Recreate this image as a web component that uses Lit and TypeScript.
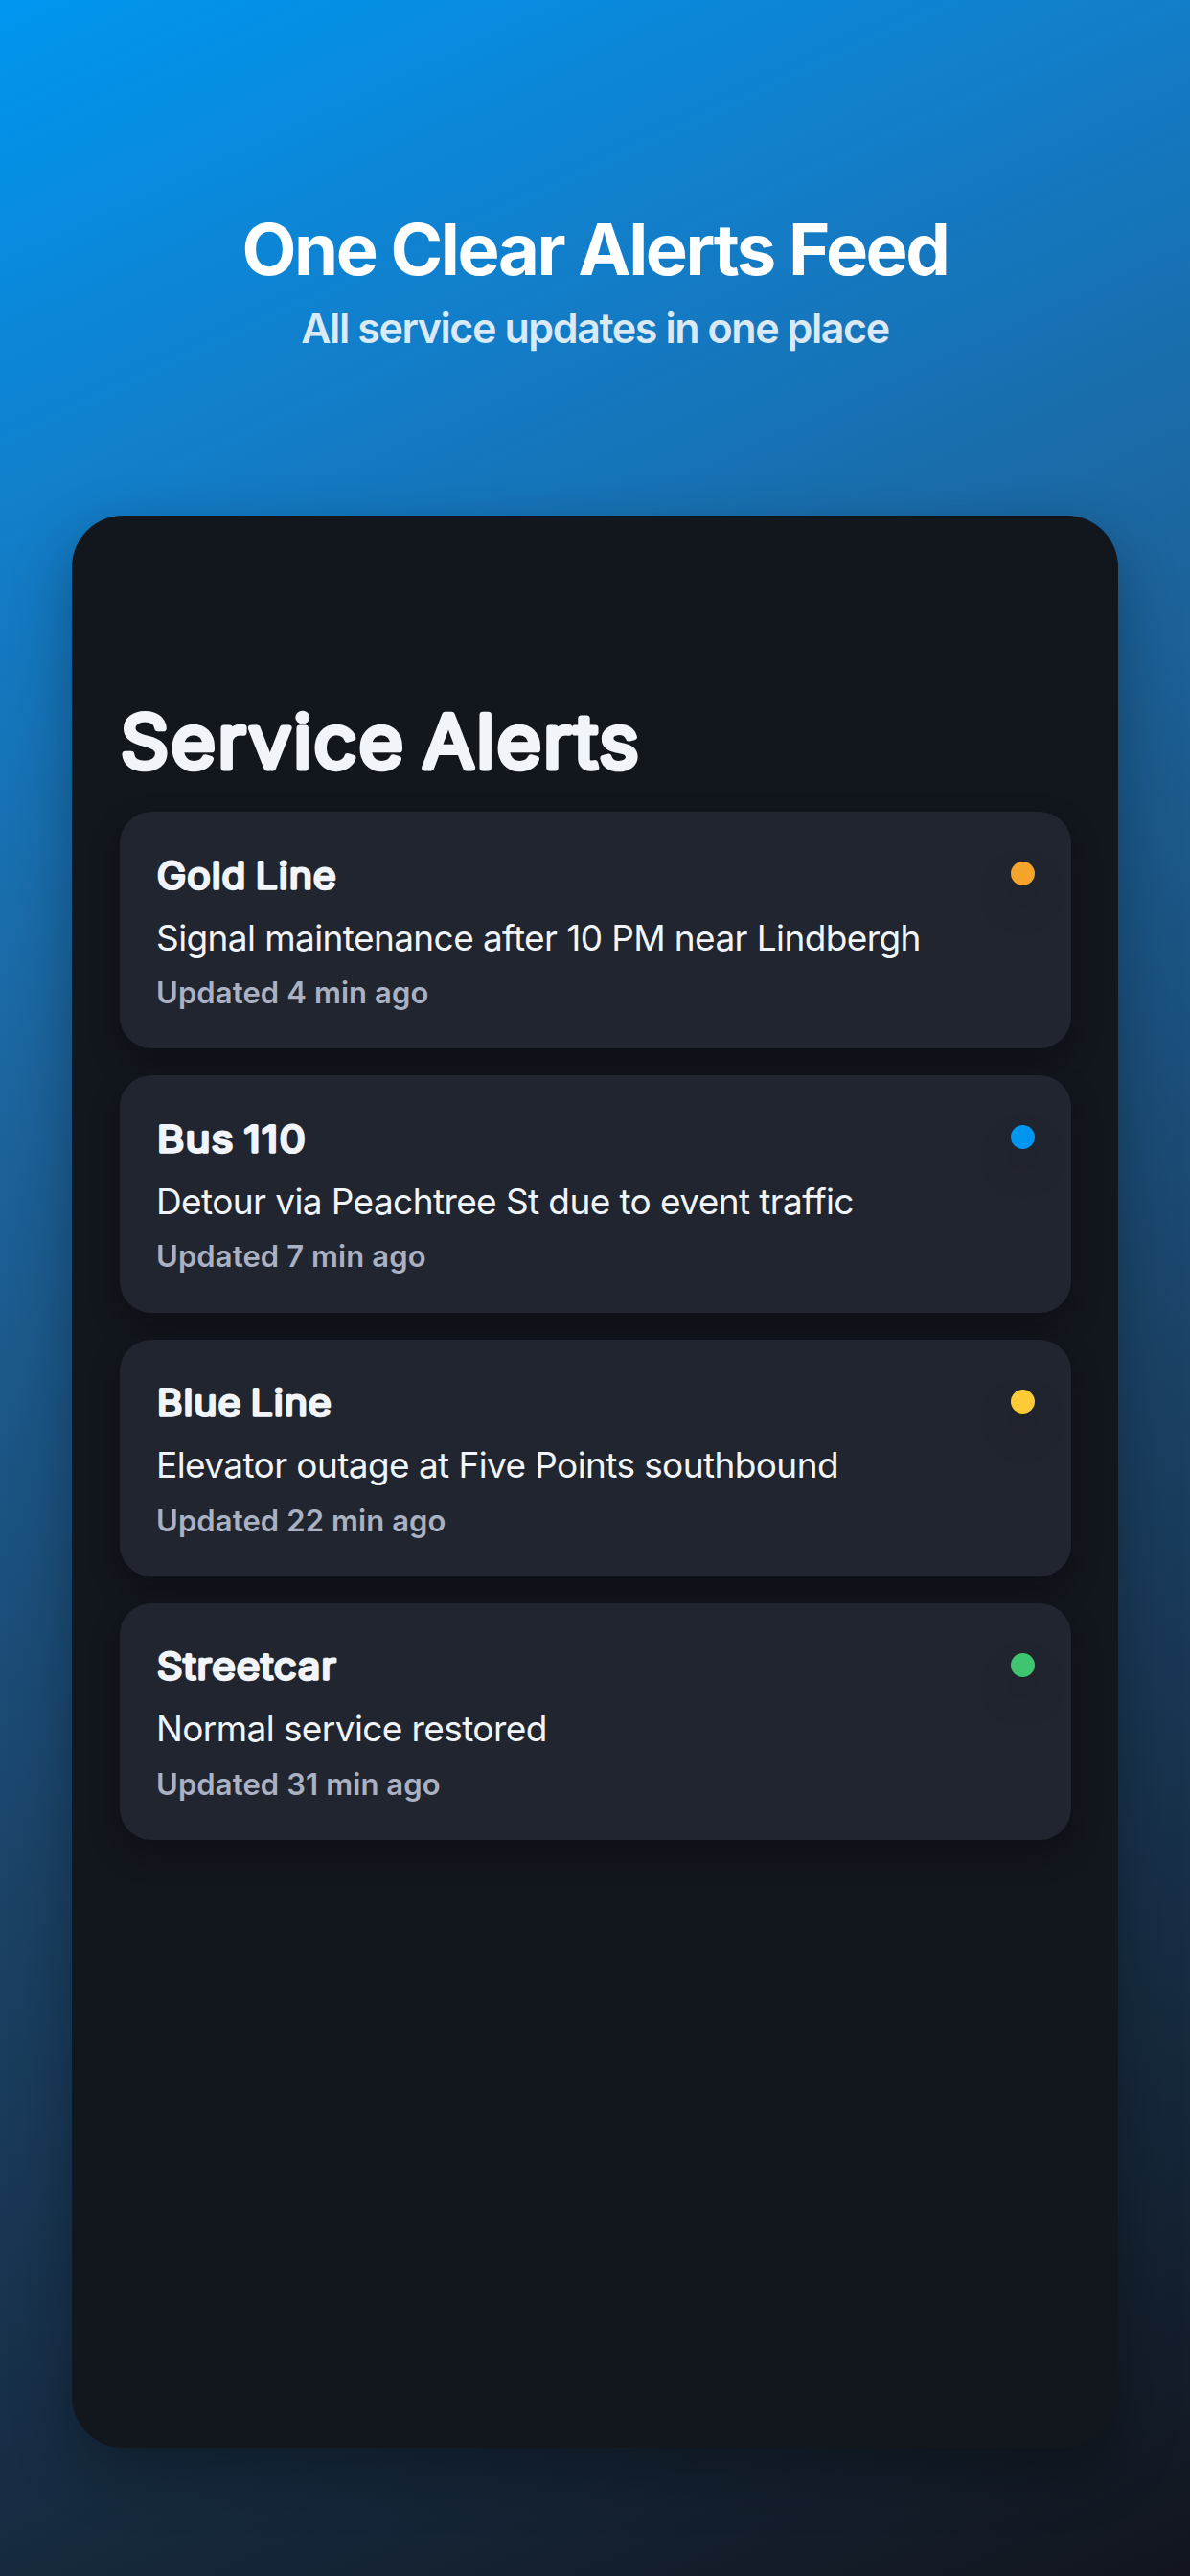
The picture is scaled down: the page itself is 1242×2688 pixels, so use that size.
import { LitElement, html, css, svg } from 'lit';
import { customElement, property } from 'lit/decorators.js';

interface ServiceAlert {
  route: string;
  message: string;
  updated: string;
  color: string;
  routeWidth: number;
}

const ALERTS: ServiceAlert[] = [
  {
    route: 'Gold Line',
    message: 'Signal maintenance after 10 PM near Lindbergh',
    updated: 'Updated 4 min ago',
    color: '#f5a42b',
    routeWidth: 188
  },
  {
    route: 'Bus 110',
    message: 'Detour via Peachtree St due to event traffic',
    updated: 'Updated 7 min ago',
    color: '#0096f0',
    routeWidth: 156
  },
  {
    route: 'Blue Line',
    message: 'Elevator outage at Five Points southbound',
    updated: 'Updated 22 min ago',
    color: '#fdcb35',
    routeWidth: 183
  },
  {
    route: 'Streetcar',
    message: 'Normal service restored',
    updated: 'Updated 31 min ago',
    color: '#3fc56f',
    routeWidth: 188
  }
];

// Lighter glyphs with a round-joined outline, gives soft terminals
@customElement('rounded-text')
export class RoundedText extends LitElement {
  @property({ type: String }) text = '';
  @property({ type: Number }) size = 34;
  @property({ type: Number }) stroke = 4;
  @property({ type: Number }) length = 100;

  static styles = css`
    :host {
      display: block;
    }

    svg {
      display: block;
      overflow: visible;
    }

    text {
      font-family: Inter, 'Liberation Sans', sans-serif;
      font-weight: 300;
      letter-spacing: 0.035em;
      word-spacing: -0.09em;
      fill: #f1f5f9;
      stroke: #f1f5f9;
      stroke-linejoin: round;
      stroke-linecap: round;
      text-rendering: geometricPrecision;
    }
  `;

  render() {
    const height = Math.round(this.size * 1.2);
    return html`
      <svg width=${this.length} height=${height}>
        ${svg`<text
          x="1"
          y=${this.size}
          font-size=${this.size}
          stroke-width=${this.stroke}
          textLength=${this.length}
          lengthAdjust="spacingAndGlyphs"
        >${this.text}</text>`}
      </svg>
    `;
  }
}

@customElement('alert-card')
export class AlertCard extends LitElement {
  @property({ attribute: false }) alert!: ServiceAlert;

  static styles = css`
    :host {
      display: flex;
      justify-content: space-between;
      box-sizing: border-box;
      height: 247.3px;
      padding: 41.5px 38px 0;
      border-radius: 33px;
      background: #21252f;
      box-shadow: 0 14px 32px rgba(0, 0, 0, 0.26);
    }

    .message {
      margin-top: 20px;
      font-size: 37px;
      line-height: 50px;
      letter-spacing: -0.6px;
      color: #f1f5f9;
      white-space: nowrap;
    }

    .updated {
      margin-top: 10.5px;
      font-size: 31px;
      font-weight: 600;
      line-height: 44px;
      letter-spacing: 0.1px;
      color: #a9b1c2;
      white-space: nowrap;
    }

    .dot {
      flex: none;
      width: 25px;
      height: 25px;
      margin-top: 10.5px;
      border-radius: 50%;
      box-shadow: 0 20px 40px rgba(0, 0, 0, 0.2);
    }
  `;

  render() {
    const { route, message, updated, color, routeWidth } = this.alert;
    return html`
      <div class="body">
        <rounded-text .text=${route} .size=${37.5} .stroke=${3.5} .length=${routeWidth}></rounded-text>
        <div class="message">${message}</div>
        <div class="updated">${updated}</div>
      </div>
      <div class="dot" style="background: ${color}"></div>
    `;
  }
}

@customElement('app-root')
export class AppRoot extends LitElement {
  static styles = css`
    :host {
      display: flex;
      flex-direction: column;
      box-sizing: border-box;
      width: 1242px;
      height: 2688px;
      padding: 0 75px 134px;
      overflow: hidden;
      font-family: Inter, 'Liberation Sans', sans-serif;
      background: linear-gradient(155.2deg, #0096f0 0%, #127eca 17%, #1c66a0 34%, #1b4266 61%, #12151d 100%);
    }

    .hero {
      height: 538px;
      flex: none;
      box-sizing: border-box;
      padding-top: 215px;
      text-align: center;
      white-space: nowrap;
    }

    .title {
      margin: 0;
      font-size: 74px;
      font-weight: 700;
      line-height: 90px;
      letter-spacing: -2.4px;
      color: #fff;
    }

    .subtitle {
      margin: 0;
      padding-top: 10px;
      font-size: 43px;
      font-weight: 600;
      line-height: 54px;
      letter-spacing: -1.42px;
      color: rgba(255, 255, 255, 0.85);
    }

    .screen {
      flex: 1;
      box-sizing: border-box;
      padding: 187px 49.5px 0 50px;
      border-radius: 54px;
      background: #12161d;
      box-shadow: 0 24px 64px rgba(0, 0, 0, 0.32);
    }

    .heading {
      height: 122px;
    }

    .list {
      display: flex;
      flex-direction: column;
      gap: 28px;
    }
  `;

  render() {
    return html`
      <header class="hero">
        <h1 class="title">One Clear Alerts Feed</h1>
        <p class="subtitle">All service updates in one place</p>
      </header>
      <main class="screen">
        <div class="heading">
          <rounded-text .text=${'Service Alerts'} .size=${75.5} .stroke=${6.8} .length=${543}></rounded-text>
        </div>
        <div class="list">
          ${ALERTS.map((alert) => html`<alert-card .alert=${alert}></alert-card>`)}
        </div>
      </main>
    `;
  }
}
